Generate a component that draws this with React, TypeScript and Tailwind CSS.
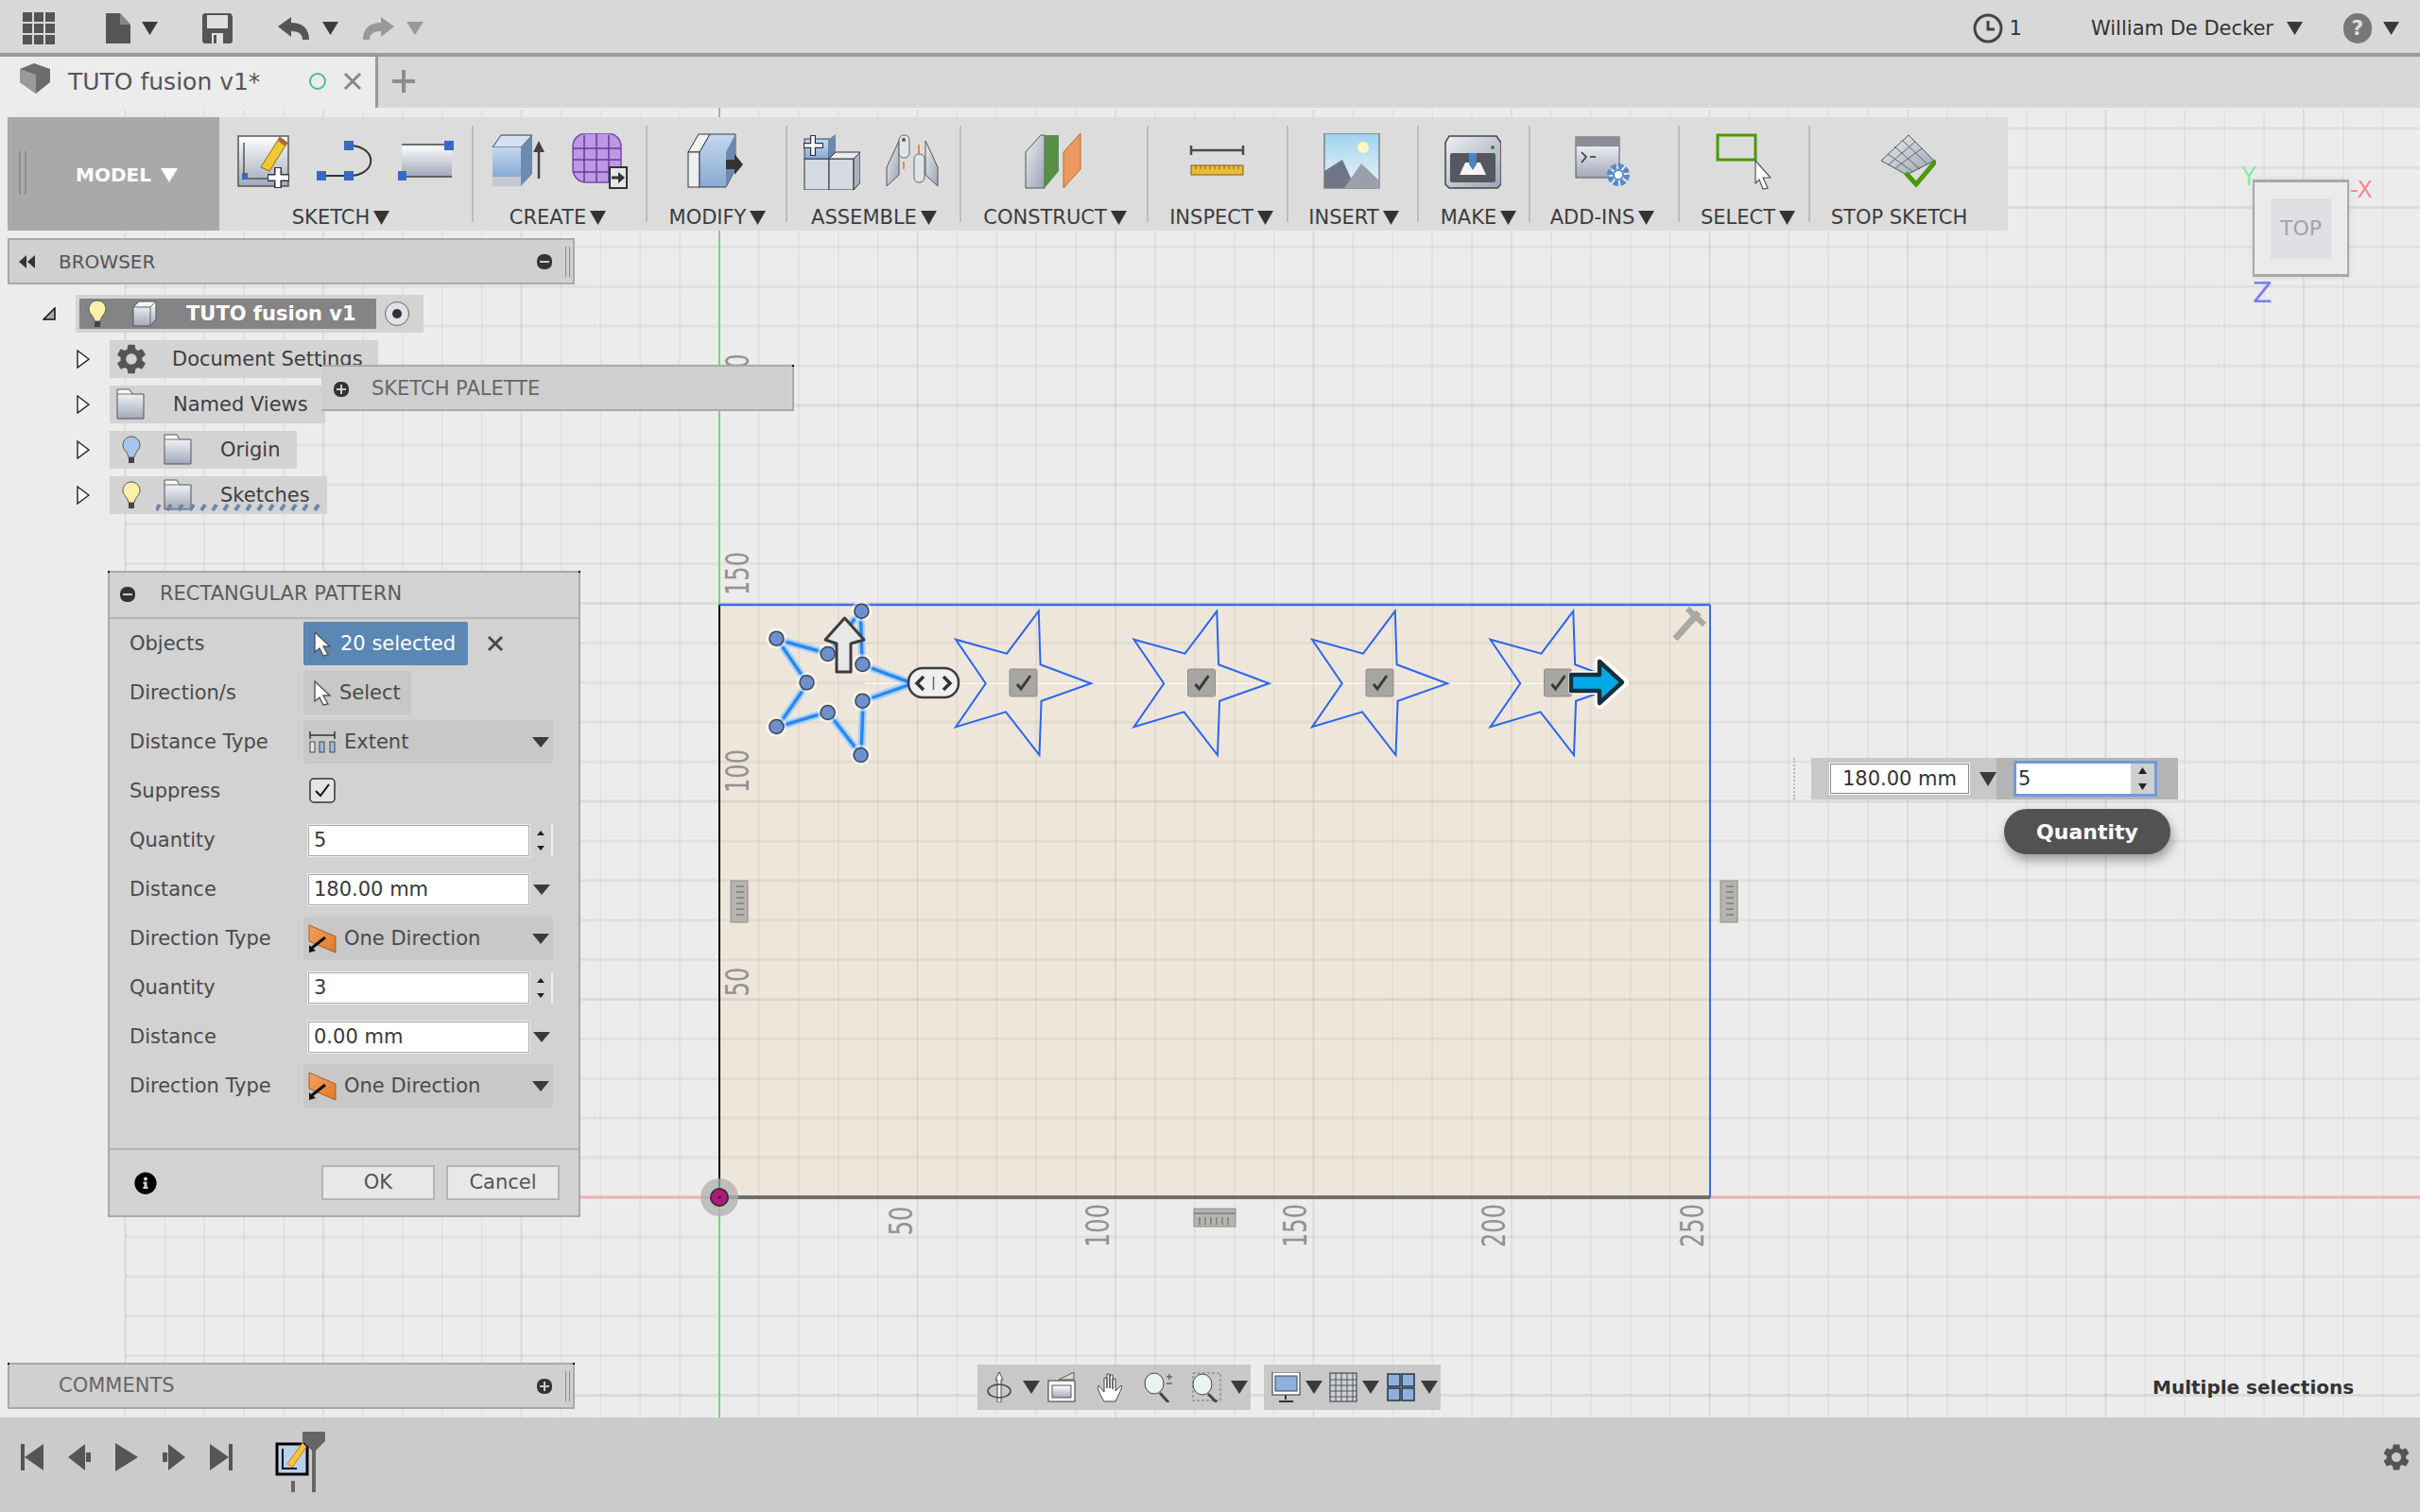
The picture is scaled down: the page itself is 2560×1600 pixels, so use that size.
import { MdSettings } from 'react-icons/md';
import { FaInfoCircle } from 'react-icons/fa';

const STAR = [
  [1098.8, 646.7], [1100.6, 703.3], [1154, 723.3], [1101.6, 741.7], [1099.5, 799],
  [1064, 753.3], [1011, 769.3], [1042.7, 723.3], [1011, 676.7], [1065, 691.7],
];
const NODES = [
  [821.4, 675.7], [875.7, 692], [911.4, 646.7], [912.4, 703], [912.4, 741.7],
  [910.6, 799], [875.7, 754], [821.4, 769], [853.5, 722.3],
];
const starPoints = (dx: number) => STAR.map(([x, y]) => `${x + dx},${y}`).join(' ');

const VLINES = Array.from({ length: 58 }, (_, i) => 132.5 + i * 41.9);
const HLINES = Array.from({ length: 33 }, (_, i) => 1267 + 209.5 - i * 41.9);

function Caret({ w = 16, h = 14, c = '#3a3a3a' }: { w?: number; h?: number; c?: string }) {
  return (
    <svg width={w} height={h} viewBox="0 0 16 14" preserveAspectRatio="none" className="shrink-0">
      <polygon points="0,0 16,0 8,14" fill={c} />
    </svg>
  );
}

function Defs() {
  return (
    <svg className="absolute w-0 h-0">
      <defs>
        <linearGradient id="gBlue" x1="0" y1="0" x2="0" y2="1">
          <stop offset="0" stopColor="#c4d8ee" />
          <stop offset="1" stopColor="#8aaad2" />
        </linearGradient>
        <linearGradient id="gPaper" x1="0" y1="0" x2="0" y2="1">
          <stop offset="0" stopColor="#ffffff" />
          <stop offset="1" stopColor="#a0a8ba" />
        </linearGradient>
        <linearGradient id="gSteel" x1="0" y1="0" x2="1" y2="1">
          <stop offset="0" stopColor="#eceef2" />
          <stop offset="1" stopColor="#9aa2b2" />
        </linearGradient>
        <linearGradient id="gSky" x1="0" y1="0" x2="0" y2="1">
          <stop offset="0" stopColor="#9fd2ee" />
          <stop offset="1" stopColor="#eef6f6" />
        </linearGradient>
        <linearGradient id="gOrange" x1="0" y1="0" x2="1" y2="1">
          <stop offset="0" stopColor="#f4a060" />
          <stop offset="1" stopColor="#e07828" />
        </linearGradient>
      </defs>
    </svg>
  );
}

function Tool({ children }: { children: React.ReactNode }) {
  return (
    <svg width={60} height={60} viewBox="0 0 60 60" className="shrink-0">
      {children}
    </svg>
  );
}

const Square = ({ x, y }: { x: number; y: number }) => <rect x={x - 5} y={y - 5} width={10} height={10} fill="#3a66c4" />;

function ToolGroup({ label, width, caret = true, labelClass = '', children }: { label: string; width: number; caret?: boolean; labelClass?: string; children: React.ReactNode }) {
  return (
    <div className="flex flex-col items-center relative border-r-2 border-transparent" style={{ width }}>
      <div className="flex items-start gap-[26px] h-[60px] mt-[17px]">{children}</div>
      <div className={`flex items-center gap-[4px] mt-[17px] h-[24px] text-[21px] leading-none text-[#3c3c3c] ${labelClass}`}>
        {label}
        {caret && <Caret w={17} h={15} c="#333" />}
      </div>
    </div>
  );
}

const Divider = () => <div className="w-[2px] h-[102px] bg-[#bcbcbc] mt-[9px] shrink-0" />;

function Toolbar() {
  return (
    <div className="absolute left-[8px] top-[10px] w-[2116px] h-[120px] bg-[#dcdcdc] flex">
      <div className="w-[224px] h-full bg-[#a9a9a9] flex items-center relative pt-[2px]">
        <div className="absolute left-[12px] top-[36px] w-[8px] h-[46px] border-x-2 border-[#8e8e8e]" />
        <span className="ml-[72px] text-white font-bold text-[20px] leading-none">MODEL</span>
        <span className="ml-[10px]"><Caret w={18} h={15} c="#fff" /></span>
      </div>
      <ToolGroup label="SKETCH" width={267} labelClass="mr-[8px]">
        <Tool>
          <rect x="3" y="3" width="53" height="53" fill="url(#gPaper)" stroke="#555" strokeWidth="1.5" />
          <path d="M9 10V48H38" fill="none" stroke="#555" strokeWidth="1.5" />
          <rect x="7" y="42" width="6" height="7" fill="#3a66c4" />
          <polygon points="47,4 55,10 36,40 27,36" fill="#f2c832" stroke="#8a6a10" strokeWidth="1" />
          <polygon points="47,4 55,10 53,14 45,8" fill="#a8693a" />
          <path d="M45 36V58M34 47H57" stroke="#333" strokeWidth="8" />
          <path d="M45 37V57M35 47H56" stroke="#fff" strokeWidth="5" />
        </Tool>
        <Tool>
          <path d="M34 13C65 13 65 45 34 45H5" fill="none" stroke="#333" strokeWidth="2" />
          <Square x={34} y={13} />
          <Square x={34} y={45} />
          <Square x={5} y={45} />
        </Tool>
        <Tool>
          <rect x="4" y="12" width="53" height="34" fill="url(#gPaper)" />
          <path d="M4 46H57M4 12H57" stroke="#444" strokeWidth="1.5" />
          <Square x={54} y={13} />
          <Square x={4} y={45} />
        </Tool>
      </ToolGroup>
      <Divider />
      <ToolGroup label="CREATE" width={182} labelClass="mr-[2px]">
        <Tool>
          <polygon points="3,15 12,2 45,2 33,15" fill="#d4e2f2" stroke="#2c3e5c" strokeWidth="1" />
          <rect x="3" y="15" width="30" height="31" fill="url(#gBlue)" />
          <rect x="3" y="46" width="30" height="10" fill="#c3c8d2" />
          <polygon points="33,15 45,2 45,43 33,56" fill="#6d8ab0" />
          <path d="M52 48V14" stroke="#444" strokeWidth="2.5" />
          <polygon points="52,8 58,20 46,20" fill="#444" />
        </Tool>
        <Tool>
          <rect x="2" y="0" width="51" height="52" rx="14" fill="#bc98e6" stroke="#7a4aa8" strokeWidth="1.5" />
          <path d="M2 16H53M2 28H53M2 41H53M14 2V52M27 0V52M40 2V52" stroke="#6a3a9a" strokeWidth="1.5" fill="none" />
          <rect x="41" y="36" width="18" height="22" fill="#e6e6e6" stroke="#333" strokeWidth="2" />
          <path d="M43 47H50" stroke="#333" strokeWidth="3" />
          <polygon points="50,41 57,47 50,53" fill="#333" />
        </Tool>
      </ToolGroup>
      <Divider />
      <ToolGroup label="MODIFY" width={146} labelClass="ml-[4px]">
        <Tool>
          <polygon points="1,20 12,1 24,1 13,20" fill="#f2f2f2" stroke="#333" strokeWidth="1" />
          <rect x="1" y="20" width="12" height="37" fill="#eceef0" stroke="#333" strokeWidth="1" />
          <polygon points="13,20 24,1 51,1 51,38 41,57 13,57" fill="url(#gBlue)" stroke="#2c3e5c" strokeWidth="1" />
          <polygon points="41,20 51,1 51,38 41,57" fill="#6b88ae" />
          <polygon points="41,28 50,28 50,22 59,33 50,44 50,38 41,38" fill="#333" />
        </Tool>
      </ToolGroup>
      <Divider />
      <ToolGroup label="ASSEMBLE" width={182} labelClass="ml-[3px]">
        <Tool>
          <rect x="1" y="27" width="26" height="33" fill="#d6dae2" stroke="#333" strokeWidth="1" />
          <rect x="1" y="6" width="26" height="21" fill="url(#gBlue)" stroke="#2c3e5c" strokeWidth="1" />
          <polygon points="27,6 34,1 34,22 27,27" fill="#6b88ae" />
          <rect x="27" y="27" width="26" height="33" fill="#d6dae2" stroke="#333" strokeWidth="1" />
          <polygon points="27,27 34,20 60,20 53,27" fill="#e8ebf0" stroke="#333" strokeWidth="1" />
          <polygon points="53,27 60,20 60,52 53,60" fill="#aab1bf" stroke="#333" strokeWidth="1" />
          <path d="M10 2V24M0 13H21" stroke="#333" strokeWidth="6" />
          <path d="M10 3V23M1 13H20" stroke="#fff" strokeWidth="3.5" />
        </Tool>
        <Tool>
          <polygon points="2,36 15,8 15,44 2,56" fill="url(#gSteel)" stroke="#555" strokeWidth="1" />
          <polygon points="56,36 43,8 43,44 56,56" fill="url(#gSteel)" stroke="#555" strokeWidth="1" />
          <rect x="15" y="2" width="11" height="24" rx="5" fill="#dfe3ea" stroke="#666" />
          <circle cx="20" cy="7" r="2" fill="#555" />
          <rect x="31" y="22" width="11" height="30" rx="5" fill="#dfe3ea" stroke="#666" />
          <path d="M20 30V38M36 12V22" stroke="#e07020" strokeWidth="1.5" />
        </Tool>
      </ToolGroup>
      <Divider />
      <ToolGroup label="CONSTRUCT" width={196} labelClass="ml-[4px]">
        <Tool>
          <polygon points="1,20 17,2 21,2 21,58 1,58" fill="url(#gSteel)" stroke="#555" strokeWidth="1" />
          <polygon points="21,2 36,2 36,40 21,58" fill="#558f48" />
          <polygon points="59,0 59,38 41,58 41,20" fill="#ec9a5e" stroke="#b86a2c" strokeWidth="1" />
        </Tool>
      </ToolGroup>
      <Divider />
      <ToolGroup label="INSPECT" width={146} labelClass="ml-[10px]">
        <Tool>
          <path d="M3 13V23M58 13V23M3 18H58" stroke="#4c4c4c" strokeWidth="2.5" fill="none" />
          <rect x="3" y="34" width="55" height="10" fill="#ebbb3a" stroke="#8a5a10" strokeWidth="1" />
          <path d="M8 34v4M13 34v4M18 34v4M23 34v4M28 34v4M33 34v4M38 34v4M43 34v4M48 34v4M53 34v4" stroke="#8a5a10" strokeWidth="1" />
        </Tool>
      </ToolGroup>
      <Divider />
      <ToolGroup label="INSERT" width={136} labelClass="ml-[4px]">
        <Tool>
          <rect x="1" y="0" width="58" height="58" fill="url(#gSky)" stroke="#555" strokeWidth="1" />
          <circle cx="42" cy="15" r="6" fill="#fff6c0" />
          <polygon points="1,58 1,40 20,28 34,58" fill="#6e7584" />
          <polygon points="22,58 40,32 59,50 59,58" fill="#99a0ac" />
        </Tool>
      </ToolGroup>
      <Divider />
      <ToolGroup label="MAKE" width={116} labelClass="ml-[12px]">
        <Tool>
          <path d="M5 3H55L60 10V54L56 58H5L1 54V10Z" fill="url(#gSteel)" stroke="#444" strokeWidth="1.5" />
          <rect x="6" y="21" width="48" height="31" rx="2" fill="#55585e" />
          <polygon points="16,44 22,31 38,31 44,44" fill="#f4f4f4" />
          <rect x="26" y="21" width="8" height="12" fill="#4f86c0" />
          <polygon points="26,33 34,33 30,39" fill="#4f86c0" />
          <circle cx="51" cy="15" r="2" fill="#2a8a3a" />
        </Tool>
      </ToolGroup>
      <Divider />
      <ToolGroup label="ADD-INS" width={156} labelClass="mr-[2px]">
        <Tool>
          <rect x="1" y="4" width="46" height="43" fill="url(#gPaper)" stroke="#555" strokeWidth="1" />
          <rect x="1" y="4" width="46" height="10" fill="#8a8e96" />
          <path d="M7 20L12 25L7 31M16 25H22" stroke="#333" strokeWidth="1.5" fill="none" />
          <circle cx="46" cy="44" r="9" fill="#fff" stroke="#5a8ac4" strokeWidth="6" strokeDasharray="5 2" />
          <circle cx="46" cy="44" r="5" fill="#fff" stroke="#5a8ac4" strokeWidth="2" />
        </Tool>
      </ToolGroup>
      <Divider />
      <ToolGroup label="SELECT" width={136} labelClass="ml-[10px]">
        <Tool>
          <rect x="3" y="2" width="40" height="26" fill="none" stroke="#4a9a00" strokeWidth="3" />
          <polygon points="43,29 59,47 51,47 56,58 51,59 47,49 43,53" fill="#fff" stroke="#555" strokeWidth="1.2" />
        </Tool>
      </ToolGroup>
      <Divider />
      <ToolGroup label="STOP SKETCH" width={208} caret={false} labelClass="mr-[18px]">
        <Tool>
          <polygon points="31,2 58,29 29,44 2,29" fill="url(#gSteel)" stroke="#555" strokeWidth="1" />
          <path d="M24 7L51 33M16 14L43 38M9 22L36 41M45 16L17 37M38 9L10 33" stroke="#666" strokeWidth="1" />
          <path d="M28 42L39 54L60 29" fill="none" stroke="#4a9a00" strokeWidth="5" />
        </Tool>
      </ToolGroup>
    </div>
  );
}

function Handle() {
  return <div className="w-[5px] h-[32px] border-x border-[#8a8a8a] ml-[14px] mr-[3px]" />;
}

function Pill({ plus = false }: { plus?: boolean }) {
  return (
    <svg width={16} height={26} viewBox="0 0 16 26" className="shrink-0">
      <rect x="0" y="5" width="16" height="16" rx="7" fill="#333" />
      <path d={plus ? 'M3 13H13M8 8V18' : 'M3 13H13'} stroke="#ccc" strokeWidth="2" />
    </svg>
  );
}

function Corners() {
  return (
    <>
      <div className="absolute -left-[2px] -top-[2px] w-[2px] h-[2px] bg-black" />
      <div className="absolute -right-[2px] -top-[2px] w-[2px] h-[2px] bg-black" />
    </>
  );
}

function Bulb({ c }: { c: string }) {
  return (
    <svg width={22} height={30} viewBox="0 0 22 30" className="shrink-0">
      <path d="M11 1C5 1 2 6 2 10C2 15 7 17 8 23H14C15 17 20 15 20 10C20 6 17 1 11 1Z" fill={c} stroke="#555" strokeWidth="1" />
      <rect x="8" y="23" width="6" height="6" fill="#444" />
    </svg>
  );
}

function Folder() {
  return (
    <svg width={30} height={34} viewBox="0 0 30 34" className="shrink-0">
      <path d="M1 6V1H14L17 6H29V32H1Z" fill="url(#gPaper)" stroke="#555" strokeWidth="1" />
      <path d="M1 6H17" stroke="#777" strokeWidth="1" />
    </svg>
  );
}

function Expander() {
  return (
    <svg width={14} height={20} viewBox="0 0 14 20" className="shrink-0">
      <polygon points="1,1 13,10 1,19" fill="#fafafa" stroke="#222" strokeWidth="1.4" />
    </svg>
  );
}

function TreeRow({ width, children, mt = 8 }: { width: number; children: React.ReactNode; mt?: number }) {
  return (
    <div className="flex items-center ml-[73px]" style={{ marginTop: mt }}>
      <Expander />
      <div className="h-[40px] ml-[21px] bg-[#d3d3d3] flex items-center text-[21px] text-[#3e3e3e] leading-none relative" style={{ width }}>
        {children}
      </div>
    </div>
  );
}

function Browser() {
  return (
    <div className="absolute left-[8px] top-[138px] w-[600px]">
      <div className="relative h-[49px] bg-[#d0d0d0] border-2 border-[#a9a9a9] flex items-center text-[#555] text-[20px] leading-none">
        <svg width={20} height={14} viewBox="0 0 20 14" className="ml-[8px]">
          <polygon points="10,0 10,14 2,7" fill="#333" />
          <polygon points="19,0 19,14 11,7" fill="#333" />
        </svg>
        <span className="ml-[24px] flex-1">BROWSER</span>
        <Pill />
        <Handle />
      </div>
      <div className="flex items-center ml-[37px] mt-[11px]">
        <svg width={14} height={14} viewBox="0 0 14 14" className="shrink-0">
          <polygon points="13,1 13,13 1,13" fill="#aaa" stroke="#111" strokeWidth="1.5" />
        </svg>
        <div className="ml-[21px] w-[368px] h-[40px] bg-[#d3d3d3] flex items-center">
          <div className="ml-[4px] w-[314px] h-[32px] bg-[#848484] flex items-center">
            <span className="ml-[8px]"><Bulb c="#fbf0a8" /></span>
            <svg width={28} height={28} viewBox="0 0 28 28" className="ml-[25px] shrink-0">
              <polygon points="2,7 8,1 26,1 26,20 20,27 2,27" fill="url(#gPaper)" stroke="#555" />
              <path d="M2 7H20V27M20 7L26 1" stroke="#666" fill="none" />
            </svg>
            <span className="ml-[30px] text-white font-bold text-[21px] leading-none">TUTO fusion v1</span>
          </div>
          <svg width={28} height={28} viewBox="0 0 28 28" className="ml-[8px]">
            <circle cx="14" cy="14" r="12.5" fill="#e0e2e8" stroke="#666" />
            <circle cx="14" cy="14" r="5" fill="#333" />
          </svg>
        </div>
      </div>
      <TreeRow width={284}>
        <span className="ml-[4px] text-[#555] flex"><MdSettings size={38} /></span>
        <span className="ml-[24px] whitespace-nowrap">Document Settings</span>
      </TreeRow>
      <TreeRow width={228}>
        <span className="ml-[7px] flex"><Folder /></span>
        <span className="ml-[30px]">Named Views</span>
      </TreeRow>
      <TreeRow width={198}>
        <span className="ml-[12px] flex"><Bulb c="#a4c6ea" /></span>
        <span className="ml-[23px] flex"><Folder /></span>
        <span className="ml-[30px]">Origin</span>
      </TreeRow>
      <TreeRow width={230}>
        <span className="ml-[12px] flex"><Bulb c="#fbf0a8" /></span>
        <span className="ml-[23px] flex"><Folder /></span>
        <span className="ml-[30px]">Sketches</span>
        <svg width={176} height={8} viewBox="0 0 176 8" className="absolute left-[49px] bottom-[3px]">
          <path d="M0 7L4 1M12 7L16 1M24 7L28 1M36 7L40 1M48 7L52 1M60 7L64 1M72 7L76 1M84 7L88 1M96 7L100 1M108 7L112 1M120 7L124 1M132 7L136 1M144 7L148 1M156 7L160 1M168 7L172 1" stroke="#6c86aa" strokeWidth="4" />
        </svg>
      </TreeRow>
    </div>
  );
}

function SketchPalette() {
  return (
    <div className="absolute left-[340px] top-[272px] w-[500px] h-[49px] bg-[#cfcfcf] border-t-2 border-b-2 border-r-2 border-[#a9a9a9] flex items-center text-[21px] leading-none text-[#666] pt-[2px]">
      <Corners />
      <span className="ml-[13px] flex"><Pill plus /></span>
      <span className="ml-[24px]">SKETCH PALETTE</span>
    </div>
  );
}

function CursorIcon() {
  return (
    <svg width={20} height={28} viewBox="0 0 20 28" className="shrink-0">
      <polygon points="2,2 18,17 11,17 16,26 11,27 7,19 2,23" fill="#fff" stroke="#555" strokeWidth="1.4" />
    </svg>
  );
}

function DirectionIcon() {
  return (
    <svg width={30} height={32} viewBox="0 0 30 32" className="shrink-0">
      <polygon points="1,2 29,14 29,31 1,19" fill="url(#gOrange)" stroke="#a85a20" strokeWidth="1" />
      <path d="M18 15L4 26" stroke="#111" strokeWidth="3" />
      <polygon points="1,31 1,23 8,29" fill="#111" />
    </svg>
  );
}

function DialogRow({ label, children }: { label: string; children: React.ReactNode }) {
  return (
    <div className="h-[52px] flex items-center">
      <span className="w-[205px] pl-[21px] shrink-0">{label}</span>
      {children}
    </div>
  );
}

function Dropdown({ icon, label }: { icon: React.ReactNode; label: string }) {
  return (
    <div className="w-[264px] h-[46px] bg-[#c8c8c8] flex items-center rounded-[2px]">
      <span className="ml-[5px] w-[30px] flex justify-center">{icon}</span>
      <span className="ml-[8px] flex-1">{label}</span>
      <span className="mr-[4px]"><Caret w={18} h={11} c="#3a3a3a" /></span>
    </div>
  );
}

function Field({ value, spin }: { value: string; spin?: boolean }) {
  return (
    <div className="flex items-center ml-[5px]">
      <div className="w-[234px] h-[33px] bg-white border border-[#aaa] outline outline-1 outline-[#eee] flex items-center pl-[5px] text-[#3a3a3a]">{value}</div>
      {spin ? (
        <div className="w-[25px] h-[33px] border-r-2 border-[#f0f0f0] flex flex-col items-center justify-center gap-[11px]">
          <svg width={8} height={5} viewBox="0 0 8 5"><polygon points="0,5 8,5 4,0" fill="#222" /></svg>
          <svg width={8} height={5} viewBox="0 0 8 5"><polygon points="0,0 8,0 4,5" fill="#222" /></svg>
        </div>
      ) : (
        <span className="ml-[4px]"><Caret w={18} h={11} c="#3a3a3a" /></span>
      )}
    </div>
  );
}

function PatternDialog() {
  return (
    <div className="absolute left-[114px] top-[490px] w-[500px] h-[684px] bg-[#d2d2d2] border-2 border-[#a9a9a9] flex flex-col text-[21px] leading-none text-[#4a4a4a]">
      <Corners />
      <div className="h-[49px] pb-[2px] border-b-2 border-[#b4b4b4] flex items-center shrink-0 text-[#5c5c5c]">
        <span className="ml-[11px] flex"><Pill /></span>
        <span className="ml-[26px]">RECTANGULAR PATTERN</span>
      </div>
      <DialogRow label="Objects">
        <div className="w-[174px] h-[46px] bg-[#5a87b3] flex items-center text-white rounded-[2px]">
          <span className="ml-[10px] flex"><CursorIcon /></span>
          <span className="ml-[9px]">20 selected</span>
        </div>
        <svg width={18} height={18} viewBox="0 0 18 18" className="ml-[20px]">
          <path d="M2 2L16 16M16 2L2 16" stroke="#4a4a4a" strokeWidth="3" />
        </svg>
      </DialogRow>
      <DialogRow label="Direction/s">
        <div className="w-[114px] h-[46px] bg-[#c8c8c8] flex items-center rounded-[2px]">
          <span className="ml-[10px] flex"><CursorIcon /></span>
          <span className="ml-[8px]">Select</span>
        </div>
      </DialogRow>
      <DialogRow label="Distance Type">
        <Dropdown
          label="Extent"
          icon={
            <svg width={28} height={26} viewBox="0 0 28 26">
              <path d="M1 2V10M27 2V10M1 6H27" stroke="#333" strokeWidth="1.5" />
              <rect x="1" y="13" width="5" height="11" fill="#dfe8f2" stroke="#444" />
              <rect x="11" y="13" width="5" height="11" fill="#9fbadc" stroke="#444" />
              <rect x="22" y="13" width="5" height="11" fill="#9fbadc" stroke="#444" />
            </svg>
          }
        />
      </DialogRow>
      <DialogRow label="Suppress">
        <svg width={28} height={28} viewBox="0 0 28 28" className="ml-[6px]">
          <rect x="1" y="1" width="26" height="25" rx="4" fill="#e4e4e4" stroke="#333" strokeWidth="1.5" />
          <path d="M7 14L12 19L21 7" fill="none" stroke="#111" strokeWidth="2" />
        </svg>
      </DialogRow>
      <DialogRow label="Quantity"><Field value="5" spin /></DialogRow>
      <DialogRow label="Distance"><Field value="180.00 mm" /></DialogRow>
      <DialogRow label="Direction Type"><Dropdown label="One Direction" icon={<DirectionIcon />} /></DialogRow>
      <DialogRow label="Quantity"><Field value="3" spin /></DialogRow>
      <DialogRow label="Distance"><Field value="0.00 mm" /></DialogRow>
      <DialogRow label="Direction Type"><Dropdown label="One Direction" icon={<DirectionIcon />} /></DialogRow>
      <div className="mt-[40px] flex-1 border-t-2 border-[#b4b4b4] flex items-center">
        <span className="ml-[26px] text-black flex"><FaInfoCircle size={24} /></span>
        <div className="ml-[174px] w-[120px] h-[37px] bg-[#e8e8e8] border-2 border-[#b4b4b4] flex items-center justify-center text-[#555]">OK</div>
        <div className="ml-[12px] w-[120px] h-[37px] bg-[#e8e8e8] border-2 border-[#b4b4b4] flex items-center justify-center text-[#555]">Cancel</div>
      </div>
    </div>
  );
}

function Comments() {
  return (
    <div className="absolute left-[8px] top-[1328px] w-[600px] h-[49px] bg-[#d0d0d0] border-2 border-[#a9a9a9] flex items-center text-[21px] leading-none text-[#666]">
      <Corners />
      <span className="ml-[52px] flex-1">COMMENTS</span>
      <Pill plus />
      <Handle />
    </div>
  );
}

function ViewCube() {
  return (
    <div className="absolute left-[2383px] top-[76px] w-[102px] h-[103px] bg-[#ebebeb] border-[3px] border-[#a8a8a8] border-x-2 shadow-[0_0_8px_rgba(0,0,0,0.08)] flex items-center justify-center">
      <div className="w-[64px] h-[64px] bg-[#dfe0e4] flex items-center justify-center text-[#a4a4a4] text-[22px] leading-none">TOP</div>
      <span className="absolute -left-[14px] -top-[19px] text-[26px] leading-none text-[#8fe89c]">Y</span>
      <span className="absolute left-[101px] -top-[4px] text-[24px] leading-none text-[#f08a92] whitespace-nowrap">-X</span>
      <span className="absolute left-[-2px] top-[102px] text-[30px] leading-none text-[#7c7cf0]">Z</span>
    </div>
  );
}

function SketchInputs() {
  return (
    <>
      <div className="absolute left-[1897px] top-[688px] w-[5px] h-[44px] border-l-2 border-dotted border-[#b8b8b8]" />
      <div className="absolute left-[1916px] top-[688px] w-[388px] h-[44px] flex text-[21px] leading-none text-[#333]">
        <div className="w-[196px] bg-[#c8c8c8] flex items-center">
          <div className="ml-[20px] w-[147px] h-[32px] bg-white border border-[#888] outline outline-1 outline-white flex items-center justify-center">180.00 mm</div>
          <span className="ml-[11px]"><Caret w={18} h={15} c="#3a3a3a" /></span>
        </div>
        <div className="flex-1 bg-[#b4b4b4] flex items-center">
          <div className="ml-[18px] w-[152px] h-[38px] bg-white border-[3px] border-[#6f9bd8] flex items-center pl-[2px]">
            <span className="flex-1">5</span>
            <div className="w-[25px] h-full bg-[#cfcfcf] flex flex-col items-center justify-center gap-[10px]">
              <svg width={9} height={7} viewBox="0 0 9 7"><polygon points="0,7 9,7 4.5,0" fill="#222" /></svg>
              <svg width={9} height={7} viewBox="0 0 9 7"><polygon points="0,0 9,0 4.5,7" fill="#222" /></svg>
            </div>
          </div>
        </div>
      </div>
      <div className="absolute left-[2120px] top-[742px] w-[176px] h-[48px] pt-[2px] rounded-full bg-[#525252] text-white font-bold text-[22px] leading-none flex items-center justify-center shadow-[2px_6px_12px_rgba(0,0,0,0.35)]">
        Quantity
      </div>
    </>
  );
}

function Canvas() {
  return (
    <svg width={2560} height={1386} viewBox="0 114 2560 1386" className="absolute inset-0" style={{ fontFamily: '"DejaVu Sans", sans-serif' }}>
      <rect x="761" y="640" width="1048" height="627" fill="#eee6da" />
      {VLINES.map((x, i) => (
        <line key={i} x1={x} y1={116} x2={x} y2={1500} stroke={i % 5 === 0 ? 'rgba(0,0,0,0.09)' : 'rgba(0,0,0,0.055)'} strokeWidth={1.5} />
      ))}
      {HLINES.map((y, i) => (
        <line key={i} x1={132} y1={y} x2={2560} y2={y} stroke={i % 5 === 0 ? 'rgba(0,0,0,0.07)' : 'rgba(0,0,0,0.045)'} strokeWidth={3} />
      ))}
      <line x1="761" y1="114" x2="761" y2="1500" stroke="#6fdc6f" strokeWidth="2" />
      <line x1="600" y1="1267" x2="2560" y2="1267" stroke="#f0b0b4" strokeWidth="3" />
      <line x1="761" y1="640" x2="761" y2="1267" stroke="#000" strokeWidth="2" />
      <line x1="761" y1="640" x2="1809" y2="640" stroke="#3a6ee8" strokeWidth="2.5" />
      <line x1="1809" y1="640" x2="1809" y2="1267" stroke="#3a6ee8" strokeWidth="2" />
      <line x1="761" y1="1267" x2="1809" y2="1267" stroke="#6f6e68" strokeWidth="4" />

      <circle cx="761" cy="1267" r="20" fill="#b0b0b0" opacity="0.75" />
      <circle cx="761" cy="1267" r="9" fill="#b01880" stroke="#333" strokeWidth="2" />
      <circle cx="761" cy="1267" r="1.5" fill="#222" />

      <line x1="915" y1="723" x2="1640" y2="723" stroke="#f6f1e8" strokeWidth="2" />

      {[0, 188.5, 377, 565.5].map((dx) => (
        <polygon key={dx} points={starPoints(dx)} fill="none" stroke="#2a66ee" strokeWidth="2" />
      ))}
      <polygon points={starPoints(-188.5)} fill="none" stroke="#8fc8ff" strokeWidth="8" opacity="0.75" />
      <polygon points={starPoints(-188.5)} fill="none" stroke="#2a88ee" strokeWidth="3.5" />
      {NODES.map(([x, y], i) => (
        <g key={i}>
          <circle cx={x} cy={y} r="11" fill="#fff" opacity="0.5" />
          <circle cx={x} cy={y} r="7.5" fill="#6e90d0" stroke="#444" strokeWidth="1.5" />
        </g>
      ))}
      {[0, 188.5, 377, 565.5].map((dx) => (
        <g key={dx} transform={`translate(${dx},0)`}>
          <rect x="1068" y="708" width="29" height="29" rx="2" fill="#a8a6a2" stroke="#8e8c88" />
          <path d="M1076 724L1080 729L1090 715" fill="none" stroke="#3a3a3a" strokeWidth="3" />
        </g>
      ))}

      <path d="M893.5 654L914 677L900 681V711H885V681L873 677Z" fill="#e8e8e8" stroke="#3c3c3c" strokeWidth="3" strokeLinejoin="round" />

      <rect x="961" y="707" width="53" height="31" rx="15" fill="#efefef" stroke="#3c3c3c" strokeWidth="2.5" />
      <path d="M977 716L970 723L977 730M998 716L1005 723L998 730" fill="none" stroke="#333" strokeWidth="3.5" />
      <line x1="987.5" y1="716" x2="987.5" y2="730" stroke="#666" strokeWidth="1.5" />

      <path d="M1664 715H1692V699L1718 722L1692 745V730H1664Z" fill="#00a8e6" stroke="#fff" strokeWidth="10" strokeLinejoin="round" />
      <path d="M1662 714H1692V700L1716 722L1692 744V731H1662Z" fill="#00a8e6" stroke="#17303c" strokeWidth="4.5" strokeLinejoin="round" />

      <g stroke="#a8a8a4" fill="none">
        <path d="M1772 676L1797 648" strokeWidth="7" />
        <path d="M1785 644L1803 661" strokeWidth="6" />
      </g>
      <g fill="#b4b4b0" stroke="#8c8c88">
        <rect x="773" y="932" width="18" height="44" />
        <rect x="1820" y="932" width="18" height="44" />
        <rect x="1263" y="1279" width="44" height="19" />
      </g>
      <g stroke="#7c7c78" strokeWidth="1.5">
        <path d="M779 938H787M779 944H787M779 950H787M779 956H787M779 962H787M779 968H787" />
        <path d="M1826 938H1834M1826 944H1834M1826 950H1834M1826 956H1834M1826 962H1834M1826 968H1834" />
        <path d="M1269 1288V1296M1275 1288V1296M1281 1288V1296M1287 1288V1296M1293 1288V1296M1299 1288V1296" />
        <path d="M1263 1284H1307" />
      </g>

      {[
        ['0', 780, 382],
        ['150', 780, 607],
        ['100', 780, 816],
        ['50', 780, 1039],
        ['50', 953, 1292],
        ['100', 1161, 1297],
        ['150', 1370, 1297],
        ['200', 1580, 1297],
        ['250', 1790, 1297],
      ].map(([t, x, y], i) => (
        <text key={i} transform={`translate(${x},${y}) rotate(-90) scale(1,1.4)`} textAnchor="middle" dominantBaseline="central" fontSize="24" fill="#929292">
          {t}
        </text>
      ))}
    </svg>
  );
}

function TopBar() {
  return (
    <div className="h-[56px] pt-[4px] bg-[#d8d8d8] flex items-center text-[21px] text-[#333] leading-none shrink-0">
      <div className="ml-[24px] grid grid-cols-3 gap-[2px]">
        {Array.from({ length: 9 }, (_, i) => (
          <div key={i} className="w-[10px] h-[10px] bg-[#555]" />
        ))}
      </div>
      <svg width={26} height={32} viewBox="0 0 26 32" className="ml-[54px]">
        <polygon points="0,0 15,0 26,12 26,32 0,32" fill="#555" />
        <polygon points="15,0 26,12 15,12" fill="#888" />
      </svg>
      <span className="ml-[12px]"><Caret w={17} h={14} /></span>
      <svg width={32} height={32} viewBox="0 0 32 32" className="ml-[47px]">
        <path d="M2 0H30L32 3V30L30 32H2L0 30V2Z" fill="#555" />
        <rect x="5" y="2" width="22" height="14" fill="#e0e0e0" />
        <rect x="10" y="21" width="12" height="11" fill="#e0e0e0" />
        <rect x="12" y="23" width="3" height="9" fill="#555" />
      </svg>
      <svg width={34} height={24} viewBox="0 0 34 24" className="ml-[48px]">
        <path d="M0 10L14 0V6C26 6 33 12 33 24H26C26 18 22 15 14 15V21Z" fill="#555" />
      </svg>
      <span className="ml-[13px]"><Caret w={17} h={14} /></span>
      <svg width={34} height={24} viewBox="0 0 34 24" className="ml-[25px]">
        <path d="M34 10L20 0V6C8 6 1 12 1 24H8C8 18 12 15 20 15V21Z" fill="#999" />
      </svg>
      <span className="ml-[13px]"><Caret w={18} h={14} c="#999" /></span>
      <div className="flex-1" />
      <svg width={32} height={32} viewBox="0 0 32 32">
        <circle cx="16" cy="16" r="14" fill="none" stroke="#444" strokeWidth="3" />
        <path d="M16 8V17H23" fill="none" stroke="#444" strokeWidth="3" />
      </svg>
      <span className="ml-[7px]">1</span>
      <span className="ml-[73px]">William De Decker</span>
      <span className="ml-[14px]"><Caret w={17} h={14} /></span>
      <div className="ml-[43px] w-[30px] h-[32px] rounded-full bg-[#777] text-[#ddd] font-bold text-[22px] flex items-center justify-center">?</div>
      <span className="ml-[12px] mr-[22px]"><Caret w={17} h={14} /></span>
    </div>
  );
}

function TabBar() {
  return (
    <div className="h-[54px] bg-[#d8d8d8] flex items-stretch shrink-0">
      <div className="w-[400px] bg-[#ececec] border-r-[3px] border-[#999] flex items-center text-[25px] leading-none text-[#555] pb-[2px]">
        <svg width={34} height={32} viewBox="0 0 34 32" className="ml-[20px] mb-[6px]">
          <polygon points="1,6 16,0 33,6 33,20 18,32 1,20" fill="#6c6c6c" />
          <polygon points="1,6 18,12 18,32 1,20" fill="#9a9a9a" />
        </svg>
        <span className="ml-[18px] whitespace-nowrap">TUTO fusion v1*</span>
        <svg width={20} height={20} viewBox="0 0 20 20" className="ml-[51px]">
          <circle cx="10" cy="10" r="8" fill="none" stroke="#46bca0" strokeWidth="2" />
        </svg>
        <svg width={20} height={20} viewBox="0 0 20 20" className="ml-[17px]">
          <path d="M2 2L18 18M18 2L2 18" stroke="#888" strokeWidth="3" />
        </svg>
      </div>
      <svg width={24} height={24} viewBox="0 0 24 24" className="ml-[15px] self-center mb-[3px]">
        <path d="M12 0V24M0 12H24" stroke="#8c8c8c" strokeWidth="4" />
      </svg>
    </div>
  );
}

function PlayGlyph({ d }: { d: string }) {
  return (
    <svg width={26} height={30} viewBox="0 0 26 30" className="shrink-0">
      <path d={d} fill="#555" />
    </svg>
  );
}

function BottomBar() {
  return (
    <div className="h-[100px] bg-[#cbcbcb] flex items-center shrink-0 relative pb-[16px]">
      <div className="ml-[21px] flex items-center gap-[24px]">
        <PlayGlyph d="M1 1H5V29H1ZM5 15L25 1V29Z" />
        <PlayGlyph d="M1 15L19 1V29ZM20 10H25V20H20Z" />
        <PlayGlyph d="M1 0L25 15L1 30Z" />
        <PlayGlyph d="M1 10H6V20H1ZM7 1L25 15L7 29Z" />
        <PlayGlyph d="M1 1L21 15L1 29ZM21 1H25V29H21Z" />
      </div>
      <svg width={60} height={66} viewBox="0 0 60 66" className="absolute left-[290px] top-[15px]">
        <rect x="3" y="13" width="32" height="32" fill="#b8d0ea" stroke="#000" strokeWidth="3" />
        <path d="M9 18V39H24" fill="none" stroke="#111" strokeWidth="2" />
        <polygon points="30,12 34,16 19,38 14,34" fill="#f2c832" stroke="#c87a30" strokeWidth="1" />
        <polygon points="30,0 54,0 54,10 44,20 40,20 30,10" fill="#666" />
        <rect x="40" y="18" width="4" height="46" fill="#666" />
        <rect x="18" y="52" width="4" height="12" fill="#666" />
      </svg>
      <div className="flex-1" />
      <span className="text-[#555] mr-[8px] flex"><MdSettings size={34} /></span>
    </div>
  );
}

function NavToolbar() {
  return (
    <div className="absolute left-[1034px] top-[1330px] h-[48px] flex gap-[14px]">
      <div className="w-[289px] bg-[#c8c8c8] flex items-center pl-[8px]">
        <svg width={30} height={32} viewBox="0 0 30 32">
          <path d="M15 0L19 8H17V32H13V8H11Z" fill="#fff" stroke="#444" />
          <ellipse cx="15" cy="20" rx="12" ry="7" fill="none" stroke="#444" strokeWidth="1.5" />
        </svg>
        <span className="ml-[10px]"><Caret w={18} h={14} /></span>
        <svg width={30} height={32} viewBox="0 0 30 32" className="ml-[8px]">
          <polygon points="12,8 28,0 28,8" fill="#d8d8d8" stroke="#555" />
          <rect x="1" y="9" width="28" height="22" fill="#fff" stroke="#333" />
          <rect x="5" y="14" width="20" height="13" fill="url(#gPaper)" stroke="#555" />
        </svg>
        <svg width={30} height={32} viewBox="0 0 30 32" className="ml-[21px]">
          <path d="M3 14L9 21V6H12V17V2H15V17V3H18V18V7H21V20L27 14C29 16 24 24 21 31H9C6 26 1 17 3 14Z" fill="#fff" stroke="#444" />
        </svg>
        <svg width={32} height={32} viewBox="0 0 32 32" className="ml-[21px]">
          <ellipse cx="11" cy="12" rx="10" ry="11" fill="#e8f4f0" stroke="#444" />
          <path d="M17 22L26 32" stroke="#444" strokeWidth="3" />
          <path d="M27 2V8M24 5H30M24 12H30" stroke="#666" strokeWidth="1.5" />
        </svg>
        <svg width={32} height={32} viewBox="0 0 32 32" className="ml-[19px]">
          <rect x="1" y="1" width="29" height="29" fill="none" stroke="#777" strokeDasharray="3 2" />
          <ellipse cx="11" cy="13" rx="10" ry="11" fill="#e8f4f0" stroke="#444" />
          <path d="M17 23L26 32" stroke="#444" strokeWidth="3" />
        </svg>
        <span className="ml-[9px]"><Caret w={18} h={14} /></span>
      </div>
      <div className="w-[187px] bg-[#c8c8c8] flex items-center pl-[8px]">
        <svg width={31} height={32} viewBox="0 0 31 32">
          <rect x="1" y="0" width="29" height="24" fill="#fff" stroke="#333" />
          <rect x="4" y="4" width="23" height="16" fill="#8fb0dc" stroke="#345" />
          <path d="M15 24V29M8 31H23" stroke="#333" strokeWidth="2" />
        </svg>
        <span className="ml-[5px]"><Caret w={18} h={14} /></span>
        <svg width={30} height={32} viewBox="0 0 30 32" className="ml-[7px]">
          <rect x="1" y="1" width="28" height="30" fill="#ccd0d8" stroke="#333" />
          <path d="M1 8H29M1 14H29M1 20H29M1 26H29M7 1V31M13 1V31M19 1V31M25 1V31" stroke="#555" strokeWidth="1" />
        </svg>
        <span className="ml-[5px]"><Caret w={18} h={14} /></span>
        <svg width={30} height={30} viewBox="0 0 30 30" className="ml-[8px]">
          <rect x="1" y="1" width="13" height="13" fill="#8fb0dc" stroke="#234" strokeWidth="1.5" />
          <rect x="16" y="1" width="13" height="13" fill="#8fb0dc" stroke="#234" strokeWidth="1.5" />
          <rect x="1" y="16" width="13" height="13" fill="#8fb0dc" stroke="#234" strokeWidth="1.5" />
          <rect x="16" y="16" width="13" height="13" fill="#8fb0dc" stroke="#234" strokeWidth="1.5" />
        </svg>
        <span className="ml-[6px]"><Caret w={18} h={14} /></span>
      </div>
    </div>
  );
}

export default function App() {
  return (
    <div className="w-[2560px] h-[1600px] flex flex-col overflow-hidden bg-[#ececec] font-['DejaVu_Sans',sans-serif]">
      <Defs />
      <TopBar />
      <div className="h-[4px] bg-[#999] shrink-0" />
      <TabBar />
      <div className="flex-1 relative">
        <Canvas />
        <Toolbar />
        <Browser />
        <SketchPalette />
        <PatternDialog />
        <Comments />
        <ViewCube />
        <SketchInputs />
        <NavToolbar />
        <span className="absolute left-[2277px] top-[1344px] font-bold text-[20px] leading-none text-[#333]">Multiple selections</span>
      </div>
      <BottomBar />
    </div>
  );
}
